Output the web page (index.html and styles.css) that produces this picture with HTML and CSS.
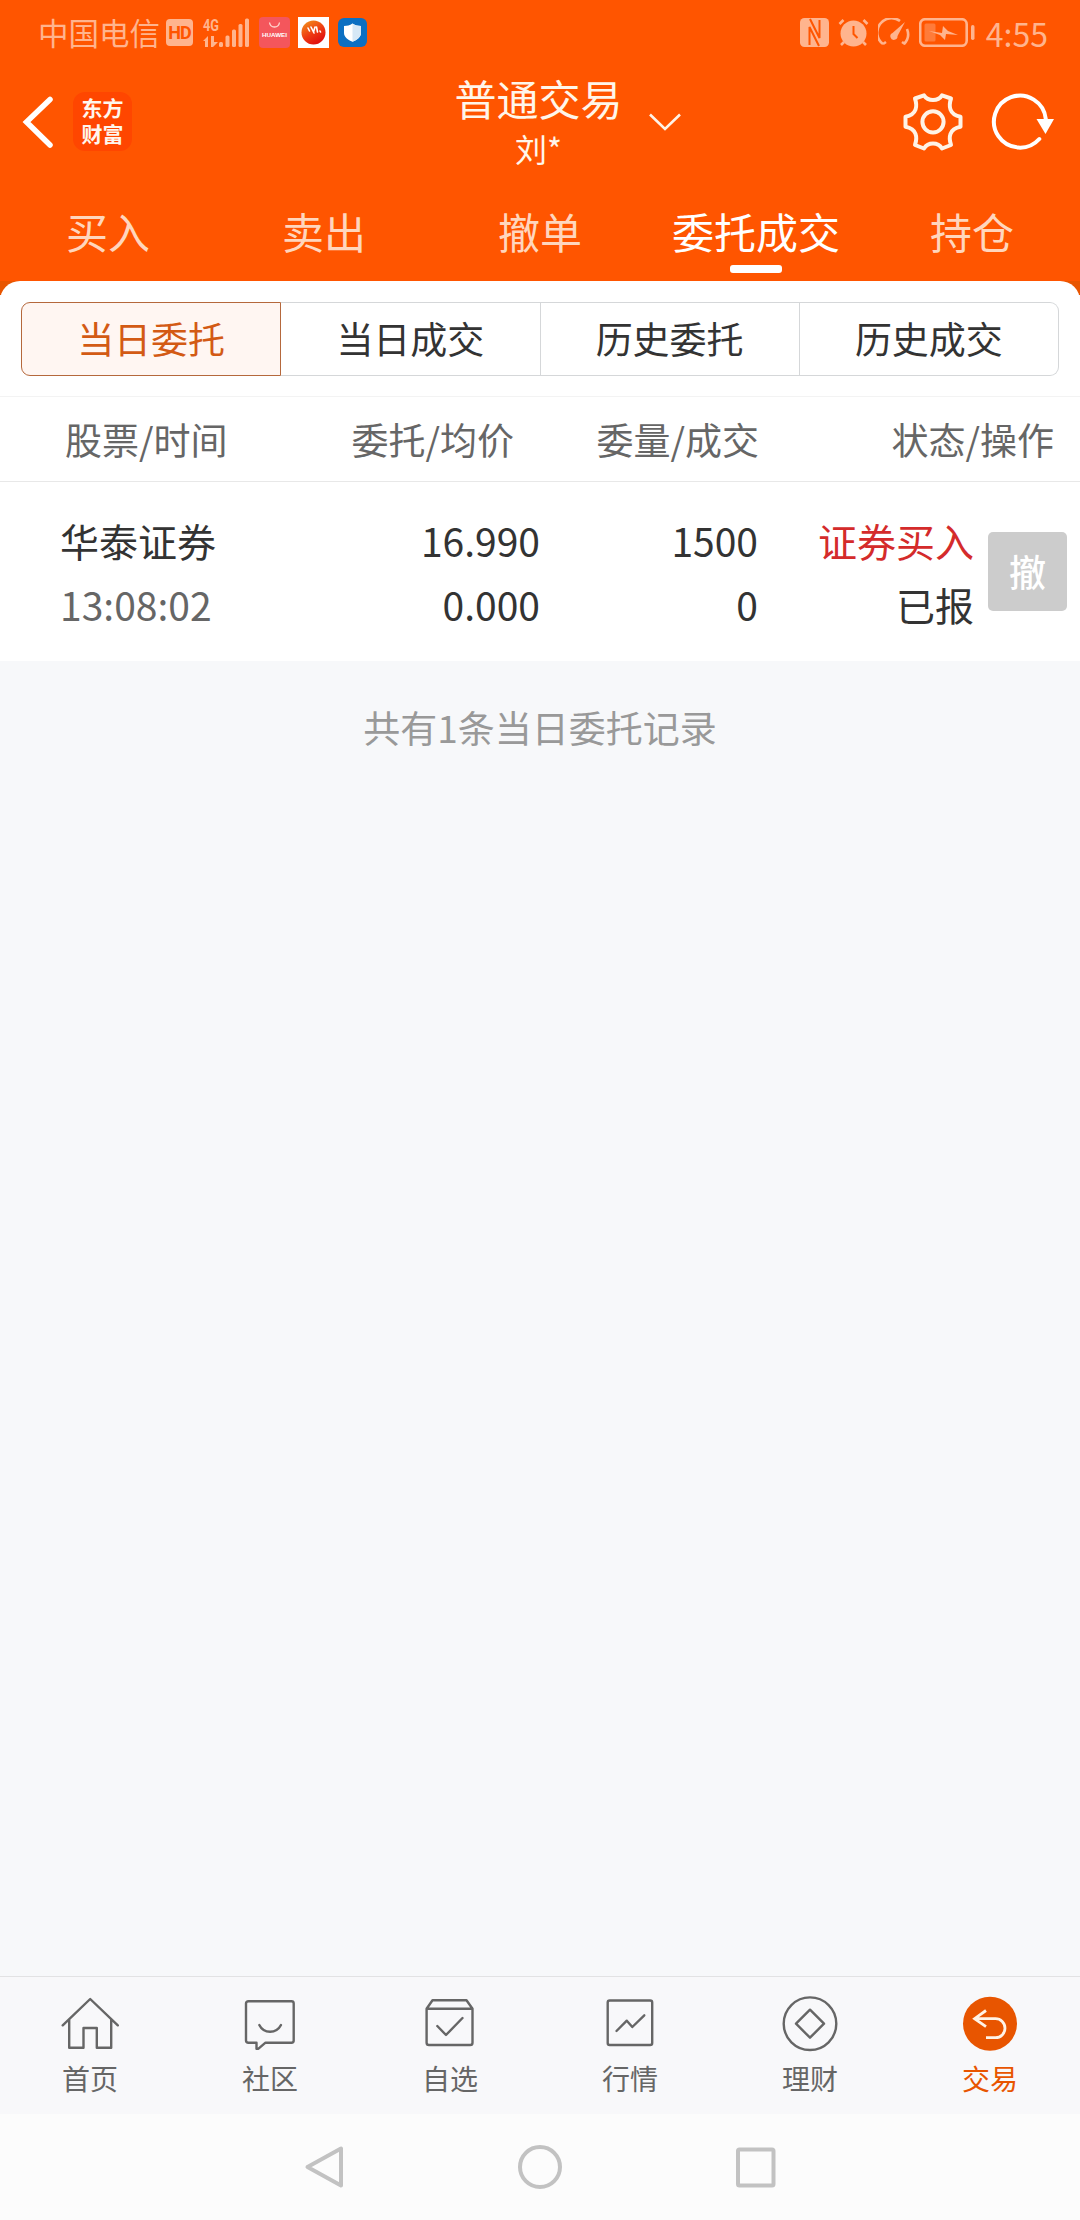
FILE: index.html
```html
<!DOCTYPE html>
<html lang="zh-CN">
<head>
    <meta charset="UTF-8">
    <meta name="viewport" content="width=device-width, initial-scale=1.0">
    <title>普通交易 - 委托成交</title>
    <link rel="stylesheet" href="styles.css">
</head>
<body>
    <header class="header">
        <div class="status-bar">
            <span class="carrier">中国电信</span>
            <span class="hd">HD</span>
            <svg class="signal" width="48" height="32" viewBox="0 0 48 32">
                <text x="1" y="14" class="net" textLength="16" lengthAdjust="spacingAndGlyphs">4G</text>
                <path d="M1 24l5-5v11h-3v-6zM9 19h3v6h4l-5 5h-2z"/>
                <rect x="17" y="25" width="4" height="5" rx="1.5"/>
                <rect x="23.500" y="18.500" width="4" height="11.500" rx="1.500"/>
                <rect x="30" y="12.500" width="4" height="17.500" rx="1.500"/>
                <rect x="36.500" y="7" width="4" height="23" rx="1.500"/>
                <rect x="43" y="1.500" width="4" height="28.500" rx="1.500"/>
            </svg>
            <svg class="app-icon huawei" width="31" height="31" viewBox="0 0 31 31">
                <rect width="31" height="31" rx="4" fill="#f4565c"/>
                <path d="M10.500 5.500c1 6 9 6 10 0" fill="none" stroke="#ffd9d0" stroke-width="1.300"/>
                <text x="3" y="20" fill="#fff" class="tiny" textLength="25" lengthAdjust="spacingAndGlyphs">HUAWEI</text>
            </svg>
            <svg class="app-icon" width="31" height="31" viewBox="0 0 31 31">
                <defs>
                    <linearGradient id="ball" x1="0" y1="0" x2=".6" y2="1">
                        <stop offset="0" stop-color="#f39a1c"/>
                        <stop offset=".6" stop-color="#ee3a12"/>
                        <stop offset="1" stop-color="#e01010"/>
                    </linearGradient>
                </defs>
                <rect width="31" height="31" fill="#fff"/>
                <circle cx="15.500" cy="15.500" r="12" fill="url(#ball)"/>
                <path d="M10 11l1.500 3M13 10l3 6M17 10l-1.500 5M18.500 10l1 5M22 14l.5 1" stroke="#fff" stroke-width="1.600" stroke-linecap="round"/>
            </svg>
            <svg class="app-icon shield" width="29" height="29" viewBox="0 0 29 29">
                <rect width="29" height="29" rx="6" fill="#0b6fc2"/>
                <path d="M14.500 5.500c3 2 5 2.300 8.500 2.500v7c0 4-4 7-8.500 8.800C10 22 6 19 6 15V8c3.500-.2 5.500-.5 8.500-2.500z" fill="#fff"/>
                <path d="M14.500 5.500c3 2 5 2.300 8.500 2.500v7c0 4-4 7-8.500 8.800z" fill="#d6e8f6"/>
            </svg>

            <div class="status-right">
                <svg width="29" height="29" viewBox="0 0 29 29">
                    <rect width="29" height="29" rx="4.500"/>
                    <path class="cut" d="M9.500 27V9l9.500 19M19.500 2v18L10 1"/>
                </svg>
                <svg width="31" height="29" viewBox="0 0 31 29">
                    <circle cx="15.500" cy="15.500" r="13"/>
                    <path class="line" d="M1.500 6l4-4M29.500 6l-4-4M6 24l-3 3M25 24l3 3"/>
                    <path class="cut" d="M15.500 8v8l4 4"/>
                </svg>
                <svg width="32" height="29" viewBox="0 0 32 29">
                    <path class="line" d="M5 26A14 14 0 0 1 22 3M29 11a14 14 0 0 1-3 15M5 26l3-2M27 26l-3-2"/>
                    <path d="M27 4L19.500 18a3.600 3.600 0 1 1-5-3z"/>
                </svg>
                <svg width="56" height="29" viewBox="0 0 56 29">
                    <rect class="line" x="1.200" y="1.200" width="46.500" height="26.600" rx="5"/>
                    <rect x="5.500" y="5.500" width="11" height="18" rx="1.500" opacity=".4"/>
                    <path d="M10 13l13 2 1-7 5 5 10 4-12-1-1 6-5-5z"/>
                    <rect x="52" y="7" width="3.500" height="15" rx="1.700"/>
                </svg>
                <span class="clock">4:55</span>
            </div>
        </div>

        <div class="title-bar">
            <div class="title-left">
                <svg width="32" height="52" viewBox="0 0 32 52">
                    <path d="M28 3.500L4.500 26 28 49" fill="none" stroke="#fff" stroke-width="5.500" stroke-linecap="round"/>
                </svg>
                <div class="logo">东方<br>财富</div>
            </div>
            <div class="title-text">
                <h1>普通交易</h1>
                <p>刘*</p>
            </div>
            <div class="title-right">
                <svg class="chevron" width="34" height="18" viewBox="0 0 34 18">
                    <path d="M2 1.500l15 14.500 15-14.500" fill="none" stroke="#fff3e6" stroke-width="2.600"/>
                </svg>
                <svg class="gear" width="60" height="60" viewBox="0 0 60 60">
                    <path d="M12 6.500L21 3.300Q24 8 30 8T39 3.300L48 6.500C45.500 14 46 22.500 57.500 24.800V34.800C46 37 45.500 45.500 48 53L39 56.500Q36 51.500 30 51.500T21 56.500L12 53C14.500 45.500 14 37 2.500 34.800V24.800C14 22.500 14.500 14 12 6.500Z"/>
                    <circle cx="30" cy="29.800" r="10.600"/>
                </svg>
                <svg class="refresh" width="64" height="60" viewBox="0 0 64 60">
                    <path d="M48.300 47A26 26 0 1 1 54.800 27" fill="none" stroke="#fff" stroke-width="4" stroke-linecap="round"/>
                    <path d="M45.500 27h17.500l-8.500 15z" fill="#fff"/>
                </svg>
            </div>
        </div>

        <nav class="tabs">
            <a class="tab">买入</a>
            <a class="tab">卖出</a>
            <a class="tab">撤单</a>
            <a class="tab active">委托成交</a>
            <a class="tab">持仓</a>
        </nav>
    </header>

    <main class="content">
        <section class="panel">
            <div class="segments">
                <a class="segment active">当日委托</a>
                <a class="segment">当日成交</a>
                <a class="segment">历史委托</a>
                <a class="segment">历史成交</a>
            </div>
            <div class="list-head">
                <span class="head-name">股票/时间</span>
                <span>委托/均价</span>
                <span>委量/成交</span>
                <span>状态/操作</span>
            </div>
            <div class="order">
                <div class="cell name">
                    <span>华泰证券</span>
                    <span class="time">13:08:02</span>
                </div>
                <div class="cell">
                    <span>16.990</span>
                    <span>0.000</span>
                </div>
                <div class="cell">
                    <span>1500</span>
                    <span>0</span>
                </div>
                <div class="cell">
                    <span class="buy">证券买入</span>
                    <span>已报</span>
                </div>
                <button class="cancel">撤</button>
            </div>
        </section>
        <p class="summary">共有1条当日委托记录</p>
    </main>

    <nav class="bottom-nav">
        <a class="nav-item">
            <svg width="60" height="60" viewBox="0 0 60 60">
                <path d="M2.700 31.300L30.200 5l27.600 26.300M9.200 26v27.800h14.300V34h13.300v19.800h14.400V26"/>
            </svg>
            首页
        </a>
        <a class="nav-item">
            <svg width="60" height="60" viewBox="0 0 60 60">
                <path d="M8.500 7.300h43q2.200 0 2.200 2.200v37q0 2.200-2.200 2.200h-26l-7 6h-2v-6h-8q-2.500 0-2.500-2.200v-37q0-2.200 2.500-2.200z"/>
                <path d="M19.300 31c4.500 9 17 9 21.700 0"/>
            </svg>
            社区
        </a>
        <a class="nav-item">
            <svg width="60" height="60" viewBox="0 0 60 60">
                <path d="M6.600 14.700L12.500 6.300h34l6 8.400v34q0 2.300-2.300 2.300H9q-2.400 0-2.400-2.300zM6.600 14.700h45.900"/>
                <path d="M17.300 32l8.700 9 16.500-17"/>
            </svg>
            自选
        </a>
        <a class="nav-item">
            <svg width="60" height="60" viewBox="0 0 60 60">
                <rect x="7.700" y="6.500" width="44.500" height="44.500" rx="2"/>
                <path d="M16.500 37l10.300-10.300 5.500 6.300 12-11.700"/>
            </svg>
            行情
        </a>
        <a class="nav-item">
            <svg width="60" height="60" viewBox="0 0 60 60">
                <circle cx="30" cy="29.700" r="26.300"/>
                <path d="M30 15.700l14 14-14 14-14-14z"/>
            </svg>
            理财
        </a>
        <a class="nav-item active">
            <svg width="60" height="60" viewBox="0 0 60 60">
                <circle cx="30" cy="29.700" r="27"/>
                <path d="M26 16.500L14.600 24.700 26 32.700M14.600 24.700H35.500a9.500 9.500 0 0 1 0 19H26"/>
            </svg>
            交易
        </a>
    </nav>

    <footer class="system-nav">
        <svg width="48" height="48" viewBox="0 0 48 48">
            <path d="M41 5.500v37L7.500 24z"/>
        </svg>
        <svg width="48" height="48" viewBox="0 0 48 48">
            <circle cx="24" cy="24" r="20"/>
        </svg>
        <svg width="48" height="48" viewBox="0 0 48 48">
            <rect x="6" y="6.500" width="35.500" height="36" rx="1.500"/>
        </svg>
    </footer>
</body>
</html>
```
FILE: styles.css
```css
* {
    box-sizing: border-box;
}

body {
    margin: 0;
    width: 1080px;
    height: 2220px;
    display: flex;
    flex-direction: column;
    font-family: "Noto Sans CJK SC", sans-serif;
    color: #333;
    background: #f7f8fa;
    overflow: hidden;
}

h1, p {
    margin: 0;
    font-weight: 400;
}

svg {
    display: block;
    flex: none;
}

.header {
    height: 281px;
    background: #ff5500;
    color: #fff;
}

/* status bar */
.status-bar {
    display: flex;
    align-items: center;
    height: 65px;
    padding: 0 32px 0 38px;
    color: #ffb48e;
    fill: #ffb48e;
}

.carrier {
    font-size: 30.5px;
    line-height: 1;
}

.hd {
    width: 27px;
    height: 27px;
    margin-left: 6px;
    border-radius: 4px;
    background: #ffb48e;
    color: #ff5500;
    font: 700 18px/27px Roboto, sans-serif;
    letter-spacing: -1px;
    text-align: center;
}

.signal {
    margin-left: 9px;
    overflow: visible;
}

.net {
    font: 700 16px Roboto, sans-serif;
}

.tiny {
    font: 700 6px "Liberation Sans", sans-serif;
}

.app-icon {
    margin-left: 8px;
}

.app-icon.huawei {
    margin-left: 9px;
}

.app-icon.shield {
    margin-left: 9px;
}

.status-right {
    display: flex;
    align-items: center;
    gap: 9px;
    margin-left: auto;
}

.status-right .line {
    fill: none;
    stroke: #ffb48e;
    stroke-width: 2.6;
}

.status-right .cut {
    fill: none;
    stroke: #ff5500;
    stroke-width: 2;
}

.clock {
    margin-left: 2px;
    font-size: 32px;
    line-height: 1;
}

/* title */
.title-bar {
    display: flex;
    align-items: center;
    height: 113px;
    padding: 0 25px 0 22px;
}

.title-left {
    display: flex;
    align-items: center;
    flex: 1;
    gap: 19px;
}

.logo {
    width: 59px;
    height: 59px;
    padding-top: 2px;
    border-radius: 12px;
    background: #ff4600;
    color: #fff6ee;
    font-size: 21px;
    font-weight: 700;
    line-height: 26px;
    text-align: center;
}

.title-text {
    padding-bottom: 3px;
    color: #fff6ea;
    text-align: center;
}

.title-text h1 {
    font-size: 42px;
    line-height: 56px;
}

.title-text p {
    font-size: 32px;
    line-height: 44px;
}

.title-right {
    display: flex;
    align-items: center;
    flex: 1;
}

.chevron {
    margin-left: 25px;
}

.gear {
    margin-left: auto;
    fill: none;
    stroke: #fff3e6;
    stroke-width: 4;
    stroke-linejoin: round;
}

.refresh {
    margin-left: 28px;
}

/* tabs */
.tabs {
    display: flex;
    height: 103px;
}

.tab {
    flex: 1;
    display: flex;
    flex-direction: column;
    align-items: center;
    padding-top: 23px;
    font-size: 42px;
    line-height: 60px;
    color: #ffd6bd;
}

.tab.active {
    color: #fff;
}

.tab.active::after {
    content: "";
    width: 52px;
    height: 8px;
    margin-top: 4px;
    border-radius: 3px;
    background: #fff;
}

/* orders */
.content {
    flex: 1;
    background: linear-gradient(#e85500 14px, #f7f8fa 14px);
}

.panel {
    border-radius: 20px 20px 0 0;
    background: #fff;
}

.segments {
    display: flex;
    padding: 21px 21px 20px;
}

.segment {
    flex: 1;
    height: 74px;
    border: 1px solid #d5d7d9;
    border-left-width: 0;
    font-size: 37px;
    line-height: 71px;
    text-align: center;
}

.segment:last-child {
    border-radius: 0 9px 9px 0;
}

.segment.active {
    border: 1px solid #b5683c;
    border-radius: 9px 0 0 9px;
    background: #fff6f2;
    color: #d35a14;
}

.list-head, .order {
    display: grid;
    grid-template-columns: 238px 302px 218px 216px 1fr;
    text-align: right;
}

.list-head {
    grid-template-columns: 238px 276px 245px 295px;
    height: 86px;
    border-top: 1px solid #f3f3f3;
    border-bottom: 1px solid #e8e8e8;
    font-size: 37px;
    line-height: 84px;
    color: #666;
}

.head-name {
    padding-left: 65px;
    text-align: left;
}

.order {
    height: 179px;
    padding-top: 26px;
    font-size: 39px;
    line-height: 64px;
}

.cell {
    display: flex;
    flex-direction: column;
}

.name {
    padding-left: 60px;
    text-align: left;
}

.time {
    color: #666;
}

.buy {
    color: #d42b2b;
}

.cancel {
    width: 79px;
    height: 79px;
    margin: 24px 0 0 14px;
    padding: 0;
    border: none;
    border-radius: 5px;
    background: #ccc;
    color: #fff;
    font-family: inherit;
    font-size: 37px;
    font-weight: 500;
    line-height: 79px;
}

.summary {
    padding-top: 39px;
    font-size: 37px;
    line-height: 54px;
    text-align: center;
    color: #999;
}

/* bottom navigation */
.bottom-nav {
    display: flex;
    height: 138px;
    border-top: 1px solid #e2e2e4;
    background: #f8f8fa;
}

.nav-item {
    flex: 1;
    display: flex;
    flex-direction: column;
    align-items: center;
    padding-top: 17px;
    font-size: 28px;
    line-height: 49px;
    color: #666;
}

.nav-item svg {
    fill: none;
    stroke: #666;
    stroke-width: 2.4;
    stroke-linecap: round;
    stroke-linejoin: round;
}

.nav-item.active {
    color: #e85500;
}

.nav-item.active svg {
    stroke: #fff3e6;
    stroke-width: 2.8;
    stroke-linecap: butt;
    stroke-linejoin: miter;
}

.nav-item.active circle {
    fill: #e85500;
    stroke: none;
}

/* system buttons */
.system-nav {
    display: flex;
    justify-content: center;
    align-items: center;
    gap: 168px;
    height: 106px;
    background: #fcfcfc;
}

.system-nav svg {
    fill: none;
    stroke: #c2c2c2;
    stroke-width: 4;
    stroke-linejoin: round;
}
```
